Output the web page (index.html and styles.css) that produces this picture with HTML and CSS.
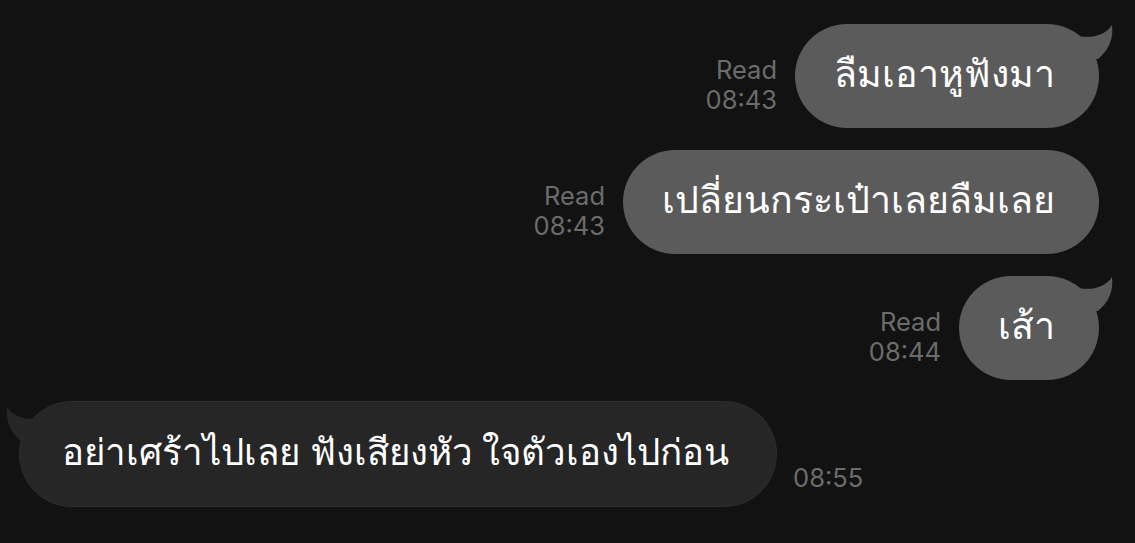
FILE: index.html
```html
<!DOCTYPE html>
<html lang="th">
<head>
<meta charset="utf-8">
<link rel="stylesheet" href="styles.css">
</head>
<body>
<div class="chat">
  <div class="row sent">
    <div class="meta"><span>Read</span><span>08:43</span></div>
    <div class="bubble tail-right b1">ลืมเอาหูฟังมา</div>
  </div>
  <div class="row sent">
    <div class="meta"><span>Read</span><span>08:43</span></div>
    <div class="bubble b2">เปลี่ยนกระเป๋าเลยลืมเลย</div>
  </div>
  <div class="row sent">
    <div class="meta"><span>Read</span><span>08:44</span></div>
    <div class="bubble tail-right b3">เส้า</div>
  </div>
  <div class="row received">
    <div class="bubble in tail-left">อย่าเศร้าไปเลย ฟังเสียงหัว ใจตัวเองไปก่อน</div>
    <div class="meta"><span>08:55</span></div>
  </div>
</div>
</body>
</html>
```
FILE: styles.css
```css
html, body {
  margin: 0;
  padding: 0;
  background: #121212;
}
body {
  width: 1135px;
  height: 543px;
  overflow: hidden;
  font-family: "Noto Sans", "DejaVu Sans", sans-serif;
}
.chat {
  display: flex;
  flex-direction: column;
  gap: 22px;
  padding: 24px 36px 0 20px;
}
.row {
  display: flex;
  align-items: flex-end;
  gap: 18px;
}
.row.sent {
  justify-content: flex-end;
}
.row.received {
  justify-content: flex-start;
  gap: 17px;
}
.meta {
  display: flex;
  flex-direction: column;
  align-items: flex-end;
  color: #6c6c6c;
  font-family: Inter, "Liberation Sans", sans-serif;
  font-size: 25.5px;
  line-height: 30px;
  margin-bottom: 13px;
}
.bubble {
  position: relative;
  height: 104px;
  box-sizing: border-box;
  border-radius: 52px;
  background: #5b5b5b;
  color: #ffffff;
  font-size: 37.5px;
  display: flex;
  align-items: center;
  padding: 0 44px 4px 39px;
  white-space: nowrap;
}
.bubble.in {
  background: #262626;
  box-shadow: 0 0 0 1px #2c2c2c;
  font-size: 36.7px;
  padding: 0 47px 4px 42px;
}
.tail-right::after {
  content: "";
  position: absolute;
  right: -15px;
  top: 1px;
  width: 40px;
  height: 36px;
  background: inherit;
  clip-path: path("M0 10 C14 14 30 12 38 0 C40 14 34 26 24 34 L0 34 Z");
}
.tail-left::before {
  content: "";
  position: absolute;
  left: -15px;
  top: 5px;
  width: 40px;
  height: 36px;
  background: inherit;
  clip-path: path("M40 10 C26 14 10 12 2 0 C0 14 6 26 16 34 L40 34 Z");
}
```
